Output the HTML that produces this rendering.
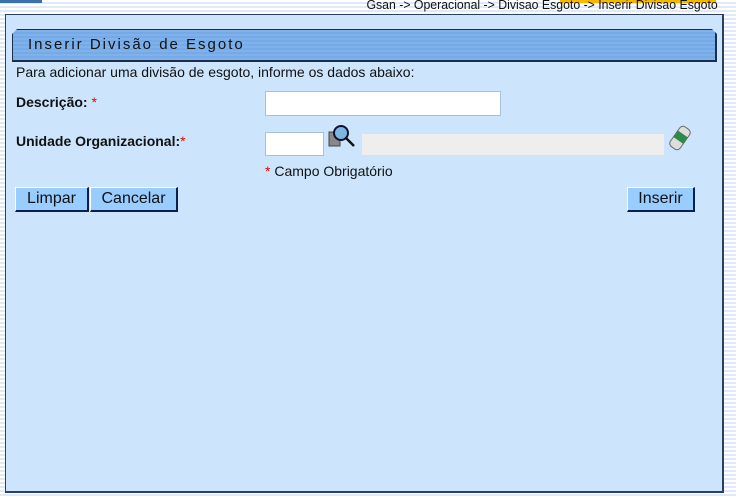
<!DOCTYPE html>
<html><head><meta charset="utf-8"><style>
body{margin:0;width:736px;height:497px;overflow:hidden;font-family:"Liberation Sans",sans-serif;
background:repeating-linear-gradient(to bottom,#ffffff 0,#ffffff 2px,#dfeaf6 2px,#dfeaf6 4px);position:relative}
.a{position:absolute}
.btn{position:absolute;top:187px;height:22px;background:#99ccff;border:1px solid #fff;border-right:2px solid #0c1f4d;border-bottom:2px solid #0c1f4d;font-size:16px;line-height:22px;text-align:center;color:#111;box-sizing:content-box}
.lbl{font-weight:bold;font-size:14px;color:#111}
.r{color:#e00;font-weight:normal}
</style></head><body>
<div class="a" style="left:0;top:0;width:42px;height:3px;background:#3a6fb0"></div>
<div class="a" style="left:560px;top:0;width:156px;height:3px;background:#f5b800"></div>
<div class="a" style="right:18px;top:-3px;font-size:13px;color:#111;transform:scaleX(0.945);transform-origin:right top;white-space:nowrap">Gsan -&gt; Operacional -&gt; Divisao Esgoto -&gt; Inserir Divisao Esgoto</div>
<div class="a" style="left:5px;top:14px;width:716px;height:476px;background:#cce5fc;border:1px solid #2a4060;border-right-width:2px;border-bottom-width:2px"></div>
<div class="a" style="left:12px;top:29px;width:702px;height:30px;border:1px solid #1b2e4a;border-right-width:2px;border-bottom-width:2px;clip-path:polygon(5px 0,calc(100% - 5px) 0,100% 5px,100% 100%,0 100%,0 5px);background:repeating-linear-gradient(to bottom,#7fb2ec 0,#7fb2ec 2px,#76aae6 2px,#76aae6 4px)"></div>
<div class="a" style="left:28px;top:36px;font-size:15px;letter-spacing:2px;color:#111">Inserir Divisão de Esgoto</div>
<div class="a" style="left:16px;top:64px;font-size:14px;color:#111">Para adicionar uma divisão de esgoto, informe os dados abaixo:</div>
<div class="a lbl" style="left:16px;top:94px">Descrição: <span class="r">*</span></div>
<div class="a" style="left:265px;top:91px;width:236px;height:25px;background:#fff;border:1px solid #a8c0d8;box-sizing:border-box"></div>
<div class="a lbl" style="left:16px;top:133px">Unidade Organizacional:<span class="r">*</span></div>
<div class="a" style="left:265px;top:132px;width:59px;height:24px;background:#fff;border:1px solid #a8c0d8;box-sizing:border-box"></div>
<svg class="a" style="left:328px;top:124px" width="30" height="30" viewBox="0 0 30 30"><rect x="1" y="8" width="11" height="14" fill="#888" stroke="#444"/><circle cx="13" cy="9" r="7" fill="#7ab8e0" stroke="#113" stroke-width="2"/><line x1="18" y1="14" x2="26" y2="22" stroke="#111" stroke-width="2.5"/></svg>
<div class="a" style="left:362px;top:134px;width:302px;height:21px;background:#eeeeee"></div>
<svg class="a" style="left:668px;top:124px" width="24" height="28" viewBox="0 0 24 28"><g transform="rotate(35 12 14)"><rect x="6" y="2" width="12" height="24" rx="4" fill="#ddd" stroke="#666"/><rect x="6" y="9" width="12" height="8" fill="#2e8a4a"/></g></svg>
<div class="a" style="left:265px;top:163px;font-size:14px;color:#111"><span style="color:#e00">*</span> Campo Obrigatório</div>
<div class="btn" style="left:15px;width:71px">Limpar</div>
<div class="btn" style="left:90px;width:85px">Cancelar</div>
<div class="btn" style="left:627px;width:65px">Inserir</div>
</body></html>
